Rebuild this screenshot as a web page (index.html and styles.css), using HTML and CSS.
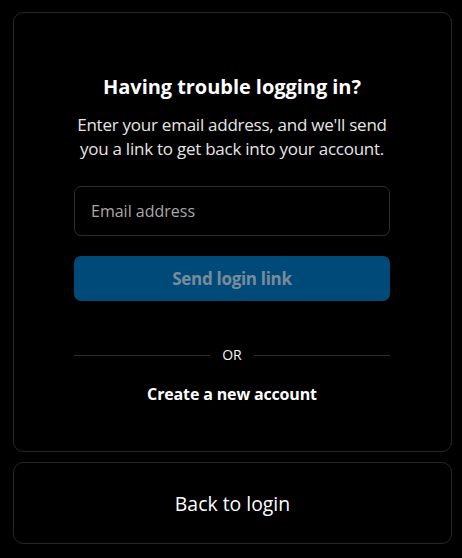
FILE: index.html
```html
<!DOCTYPE html>
<html>
<head>
<meta charset="utf-8">
<link rel="stylesheet" href="styles.css">
</head>
<body>
<div class="page">
  <div class="card main">
    <div class="content">
      <h1 class="title">Having trouble logging in?</h1>
      <p class="subtitle">Enter your email address, and we'll send you a link to get back into your account.</p>
      <div class="input">Email address</div>
      <div class="button">Send login link</div>
      <div class="divider"><span class="line"></span><span class="or">OR</span><span class="line"></span></div>
      <div class="create">Create a new account</div>
    </div>
  </div>
  <div class="card back">
    <span class="back-text">Back to login</span>
  </div>
</div>
</body>
</html>
```
FILE: styles.css
```css
html, body {
  margin: 0;
  padding: 0;
  background: #000;
  font-family: "Open Sans", "Noto Sans", sans-serif;
  color: #f5f5f5;
}
.page {
  width: 439px;
  margin: 12px 0 0 13px;
  display: flex;
  flex-direction: column;
  gap: 10px;
}
.card {
  border: 1px solid #262626;
  border-radius: 10px;
  box-sizing: border-box;
}
.main {
  height: 440px;
  padding-top: 60px;
}
.content {
  width: 316px;
  margin: 0 0 0 60px;
  display: flex;
  flex-direction: column;
  align-items: stretch;
}
.title {
  margin: 0;
  font-size: 20px;
  font-weight: 700;
  line-height: 27px;
  text-align: center;
  color: #fff;
  letter-spacing: -0.05px;
}
.subtitle {
  margin: 13px -10px 0;
  font-size: 17px;
  line-height: 24px;
  text-align: center;
  color: #e6e6e6;
  letter-spacing: -0.25px;
}
.input {
  margin-top: 25px;
  height: 50px;
  box-sizing: border-box;
  border: 1px solid #2e2e2e;
  border-radius: 7px;
  padding: 0 16px;
  display: flex;
  align-items: center;
  font-size: 16px;
  color: #a8a8a8;
}
.button {
  margin-top: 20px;
  height: 45px;
  border-radius: 7px;
  background: #004a7a;
  color: #7a8b99;
  font-weight: 700;
  font-size: 17px;
  display: flex;
  align-items: center;
  justify-content: center;
  letter-spacing: -0.3px;
}
.divider {
  margin-top: 45px;
  display: flex;
  align-items: center;
  gap: 12px;
}
.line {
  flex: 1;
  height: 1px;
  background: #2e2e2e;
}
.or {
  font-size: 14px;
  color: #f5f5f5;
  line-height: 18px;
}
.create {
  margin-top: 19px;
  text-align: center;
  font-weight: 700;
  font-size: 16px;
  color: #fff;
  letter-spacing: -0.15px;
}
.back {
  height: 82px;
  display: flex;
  align-items: center;
  justify-content: center;
}
.back-text {
  font-size: 19.4px;
  color: #fff;
}
```
